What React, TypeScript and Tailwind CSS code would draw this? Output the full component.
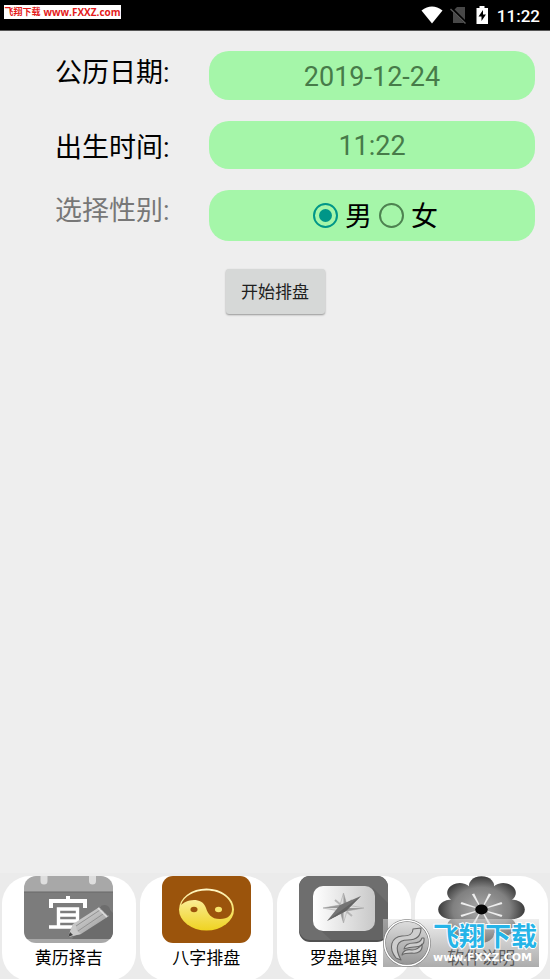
import { useState } from "react";
import type { ReactNode } from "react";

function WifiIcon() {
  return (
    <svg className="h-[18px] w-[22px]" viewBox="0 0 22 18" aria-hidden="true">
      <path d="M.5 4.500Q11-3.500 21.500 4.500L11 17.500Z" fill="#fff" />
    </svg>
  );
}

function NoSimIcon() {
  return (
    <svg className="h-[18px] w-[18px]" viewBox="0 0 18 18" aria-hidden="true">
      <path d="M7 1h8v16H3V5Z" fill="#484848" />
      <path d="M1 2 16 17" stroke="#000" strokeWidth="3" />
      <path d="M.5 3 15.500 17.500" stroke="#5a5a5a" strokeWidth="1.400" />
    </svg>
  );
}

function BatteryIcon() {
  return (
    <svg className="h-[18px] w-[12px]" viewBox="0 0 12 18" aria-hidden="true">
      <path d="M3.500 0h5v2H12v16H.5V2h3Z" fill="#fff" />
      <path d="M7 4 2.500 10.500H5.500V15L10 8.500H7Z" fill="#000" />
    </svg>
  );
}

function CalendarArt() {
  return (
    <svg className="h-[67px] w-[89px]" viewBox="0 0 89 67" aria-hidden="true">
      <defs>
        <clipPath id="cal-shape">
          <rect width="89" height="67" rx="12" />
        </clipPath>
        <linearGradient id="pencil" x1="0" y1="0" x2="1" y2="1">
          <stop offset="0" stopColor="#e2e2e2" />
          <stop offset=".5" stopColor="#bcbcbc" />
          <stop offset="1" stopColor="#8c8c8c" />
        </linearGradient>
      </defs>
      <g clipPath="url(#cal-shape)">
        <rect width="89" height="67" fill="#a8a8a8" />
        <rect y="16" width="89" height="47" fill="#7c7c7c" />
        <path d="M0 16h89" stroke="#686868" />
        <path d="M50 60 86 34 89 37V63H48Z" fill="#6c6c6c" />
        <path d="M16.500-2V5a3.500 3.500 0 0 0 7 0V-2ZM65-2V5a3.500 3.500 0 0 0 7 0V-2Z" fill="#dedede" />
        <path d="M44 20v6M27 32V25H61V32" fill="none" stroke="#fff" strokeWidth="4" />
        <path d="M34.500 51V33H53.500V51M34 39H54M34 45H54M25 51H63" fill="none" stroke="#fff" strokeWidth="3.400" />
        <path d="M44 61 49 48 77 30 85 40 57 58Z" fill="url(#pencil)" />
        <path d="M44 61 49 48 52 50 53 55 57 58Z" fill="#cacaca" />
        <path d="M44 61 46 56 49 59Z" fill="#444" />
        <path d="m52 50 27-18M54 55l28-19" stroke="#929292" strokeWidth="1" />
        <path d="M75 31Q81 27 85 31Q88 35 84 40Z" fill="#6d6d6d" />
        <path d="m74 32 9 9" stroke="#ddd" strokeWidth="1.500" />
      </g>
    </svg>
  );
}

function TaijiArt() {
  return (
    <svg className="h-[67px] w-[89px]" viewBox="0 0 89 67" aria-hidden="true">
      <defs>
        <linearGradient id="gold" x1="0" y1="0" x2="0" y2="1">
          <stop offset="0" stopColor="#fff6c8" />
          <stop offset=".5" stopColor="#f6e46d" />
          <stop offset="1" stopColor="#efd321" />
        </linearGradient>
      </defs>
      <rect width="89" height="67" rx="11" fill="#9b540c" />
      <ellipse cx="44.500" cy="33.500" rx="27.500" ry="21" fill="url(#gold)" />
      <path d="M19 29C22 20 32 14.500 44.500 14.500C59 14.500 70 23 70 33C70 39 66 43 58 43C49 43 46 38 44 32C42 26 37 24 32 24C26 24 21 27 19 29Z" fill="#9b540c" />
      <ellipse cx="32" cy="33.500" rx="3.500" ry="2.800" fill="#9b540c" />
      <ellipse cx="56.500" cy="33.500" rx="3.500" ry="2.800" fill="#f6e46d" />
    </svg>
  );
}

function CompassArt() {
  return (
    <svg className="h-[67px] w-[89px]" viewBox="0 0 89 67" aria-hidden="true">
      <defs>
        <linearGradient id="dial" x1="0" y1="0" x2="1" y2="0">
          <stop offset="0" stopColor="#fff" />
          <stop offset="1" stopColor="#c8c8c8" />
        </linearGradient>
      </defs>
      <rect width="89" height="66" rx="11" fill="#505050" />
      <rect width="89" height="64" rx="11" fill="#6e6e6e" />
      <path d="M74 12 89 27V53Q89 64 78 64H32L18 51Z" fill="#646464" />
      <rect x="14" y="10" width="62" height="45" rx="10" fill="url(#dial)" />
      <path d="m36 24 6 5M53 24l-6 6M36 40l6-5M53 40l-6-5" stroke="#b5b5b5" strokeWidth="2" />
      <path d="m44.500 17 3.500 12 17 3-17 3-3.500 12-3.500-12-17-3 17-3Z" fill="#dcdcdc" stroke="#b0b0b0" strokeWidth=".7" />
      <path d="M44.500 17V32L48 29ZM65 32H44.500L48 35ZM44.500 47V32L41 35ZM24 32H44.500L41 29Z" fill="#999" />
      <path d="M62 20 47 35 28 45 41 29Z" fill="#747474" />
      <path d="M62 20 28 45 47 35Z" fill="#626262" />
    </svg>
  );
}

const petalAngles = [180, 135, 225, 90, 270, 45, 315, 0];

function FlowerArt() {
  return (
    <svg className="h-[67px] w-[89px]" viewBox="0 0 89 67" aria-hidden="true">
      <defs>
        <radialGradient id="petal" gradientUnits="userSpaceOnUse" cx="0" cy="0" r="34">
          <stop offset="0" stopColor="#aaa" />
          <stop offset=".65" stopColor="#808080" />
          <stop offset="1" stopColor="#363636" />
        </radialGradient>
      </defs>
      <g transform="translate(44.500 33.500) scale(1.300 1)">
        {petalAngles.map((angle) => (
          <path key={angle} transform={`rotate(${angle})`} d="M0 0-9-20A9.700 9.700 0 1 1 9-20Z" fill="url(#petal)" />
        ))}
        {petalAngles.map((angle) => (
          <path key={angle} transform={`rotate(${angle + 22.5})`} d="M-.5-5-1-17H1L.5-5Z" fill="#eee" />
        ))}
        <ellipse rx="4.800" ry="5" fill="#050505" />
      </g>
    </svg>
  );
}

function NavItem({ label, children }: { label: string; children: ReactNode }) {
  return (
    <button type="button" className="mx-[2px] flex h-[105px] flex-1 flex-col items-center rounded-[28px] bg-white">
      {children}
      <span className="mt-[2px] text-[17px] leading-[26px] text-black">{label}</span>
    </button>
  );
}

function Watermark() {
  return (
    <div className="pointer-events-none absolute right-[11px] bottom-[12px] flex h-[48px] w-[156px] items-start bg-linear-to-b from-[#dddddd]/50 to-[#808080]/65">
      <svg className="h-[48px] w-[50px] shrink-0" viewBox="0 0 50 48" aria-hidden="true">
        <defs>
          <linearGradient id="seal" x1="0" y1="0" x2="0" y2="1">
            <stop offset="0" stopColor="#dedede" />
            <stop offset="1" stopColor="#949494" />
          </linearGradient>
        </defs>
        <circle cx="24" cy="24" r="22.500" fill="url(#seal)" stroke="#707070" strokeWidth="2.500" />
        <circle cx="24" cy="24" r="22.500" fill="none" stroke="#fff" strokeWidth="1.500" />
        <g fill="#cecece" stroke="#686868" strokeWidth="1.100" strokeLinejoin="round">
          <path d="M13 39C5 29 8 18 19 17C27 17 30 15 30 10L38 9C38 17 34 21 25 21C14 21 11 28 18 41Z" />
          <path d="M21 30C22 25 27 24 31 24C36 24 38 22 39 19L41 19C42 26 37 28 31 28C26 28 24 29 21 30Z" />
          <path d="M19 36C20 31 25 30 29 31C34 31 37 28 39 25C40 32 35 35 29 34C24 34 21 34 19 36Z" />
        </g>
      </svg>
      <div className="flex flex-col whitespace-nowrap">
        <span className="mt-[4px] text-[26px] leading-[28px] font-bold text-[#25b4e8] [paint-order:stroke] [-webkit-text-stroke:2px_white]">飞翔下载</span>
        <span className="font-['DejaVu_Sans',sans-serif] text-[11px] leading-[13px] font-bold text-white">www.FXXZ.COM</span>
      </div>
    </div>
  );
}

const fieldStyle =
  "w-full rounded-[20px] bg-[#a5f6a9] pt-[2px] text-center text-[27px] text-[#477b49] outline-none";
const radioStyle =
  "grid size-[25px] shrink-0 appearance-none place-content-center rounded-full border-2 border-[#4d8250] checked:border-[#009688] checked:before:size-[13px] checked:before:rounded-full checked:before:bg-[#009688]";

export default function App() {
  const [gender, setGender] = useState("male");

  return (
    <div className="flex min-h-screen flex-col bg-[#eeeeee] font-[Roboto,'Noto_Sans_CJK_SC',sans-serif]">
      <header className="flex h-[31px] items-start justify-between border-b border-[#555555] bg-black pr-[10px] pl-[4px] text-white">
        <div className="mt-[5px] flex h-[14px] w-[117px] items-center justify-center gap-[3px] bg-white font-bold whitespace-nowrap text-[#e41b1b]">
          <span className="text-[9px] leading-[14px]">飞翔下载</span>
          <span className="font-['Open_Sans',sans-serif] text-[10px] leading-[14px]">www.FXXZ.com</span>
        </div>
        <div className="flex h-[30px] items-center">
          <WifiIcon />
          <span className="ml-[7px] flex"><NoSimIcon /></span>
          <span className="ml-[8px] flex"><BatteryIcon /></span>
          <span className="ml-[9px] pt-[2px] text-[17px] leading-[20px] font-medium">11:22</span>
        </div>
      </header>

      <main className="flex flex-1 flex-col items-center">
        <form className="flex w-full flex-col items-center" onSubmit={(event) => event.preventDefault()}>
          <div className="flex w-full pt-5 pr-[15px]">
            <div className="flex w-[209px] shrink-0 flex-col pt-[4px] pl-[55px] text-[27px] leading-[36px] text-black">
              <label htmlFor="birth-date" className="mb-[39px]">公历日期:</label>
              <label htmlFor="birth-time" className="mb-[27px]">出生时间:</label>
              <span id="gender-label" className="text-[#777777]">选择性别:</span>
            </div>
            <div className="flex min-w-0 flex-1 flex-col gap-[21px]">
              <input id="birth-date" type="text" readOnly defaultValue="2019-12-24" className={`${fieldStyle} h-[49px]`} />
              <input id="birth-time" type="text" readOnly defaultValue="11:22" className={`${fieldStyle} h-[48px]`} />
              <div role="radiogroup" aria-labelledby="gender-label" className="flex h-[51px] items-center justify-center gap-[7px] rounded-[20px] bg-[#a5f6a9] pl-[7px] text-[27px] leading-[36px] text-black">
                <label className="flex items-center gap-[7px]">
                  <input type="radio" name="gender" value="male" checked={gender === "male"} onChange={() => setGender("male")} className={radioStyle} />
                  <span className="pt-[2px]">男</span>
                </label>
                <label className="flex items-center gap-[7px]">
                  <input type="radio" name="gender" value="female" checked={gender === "female"} onChange={() => setGender("female")} className={radioStyle} />
                  <span className="pt-[2px]">女</span>
                </label>
              </div>
            </div>
          </div>
          <button type="submit" className="mt-[28px] h-[45px] w-[99px] rounded-[3px] bg-[#d6d8d7] pt-[2px] text-[17px] text-[#202020] shadow-[0_1px_2px_#00000060]">
            开始排盘
          </button>
        </form>
      </main>

      <nav className="relative flex h-[106px] overflow-hidden bg-[#ebebeb] pt-[3px]">
        <NavItem label="黄历择吉"><CalendarArt /></NavItem>
        <NavItem label="八字排盘"><TaijiArt /></NavItem>
        <NavItem label="罗盘堪舆"><CompassArt /></NavItem>
        <NavItem label="软件说明"><FlowerArt /></NavItem>
        <Watermark />
      </nav>
    </div>
  );
}
